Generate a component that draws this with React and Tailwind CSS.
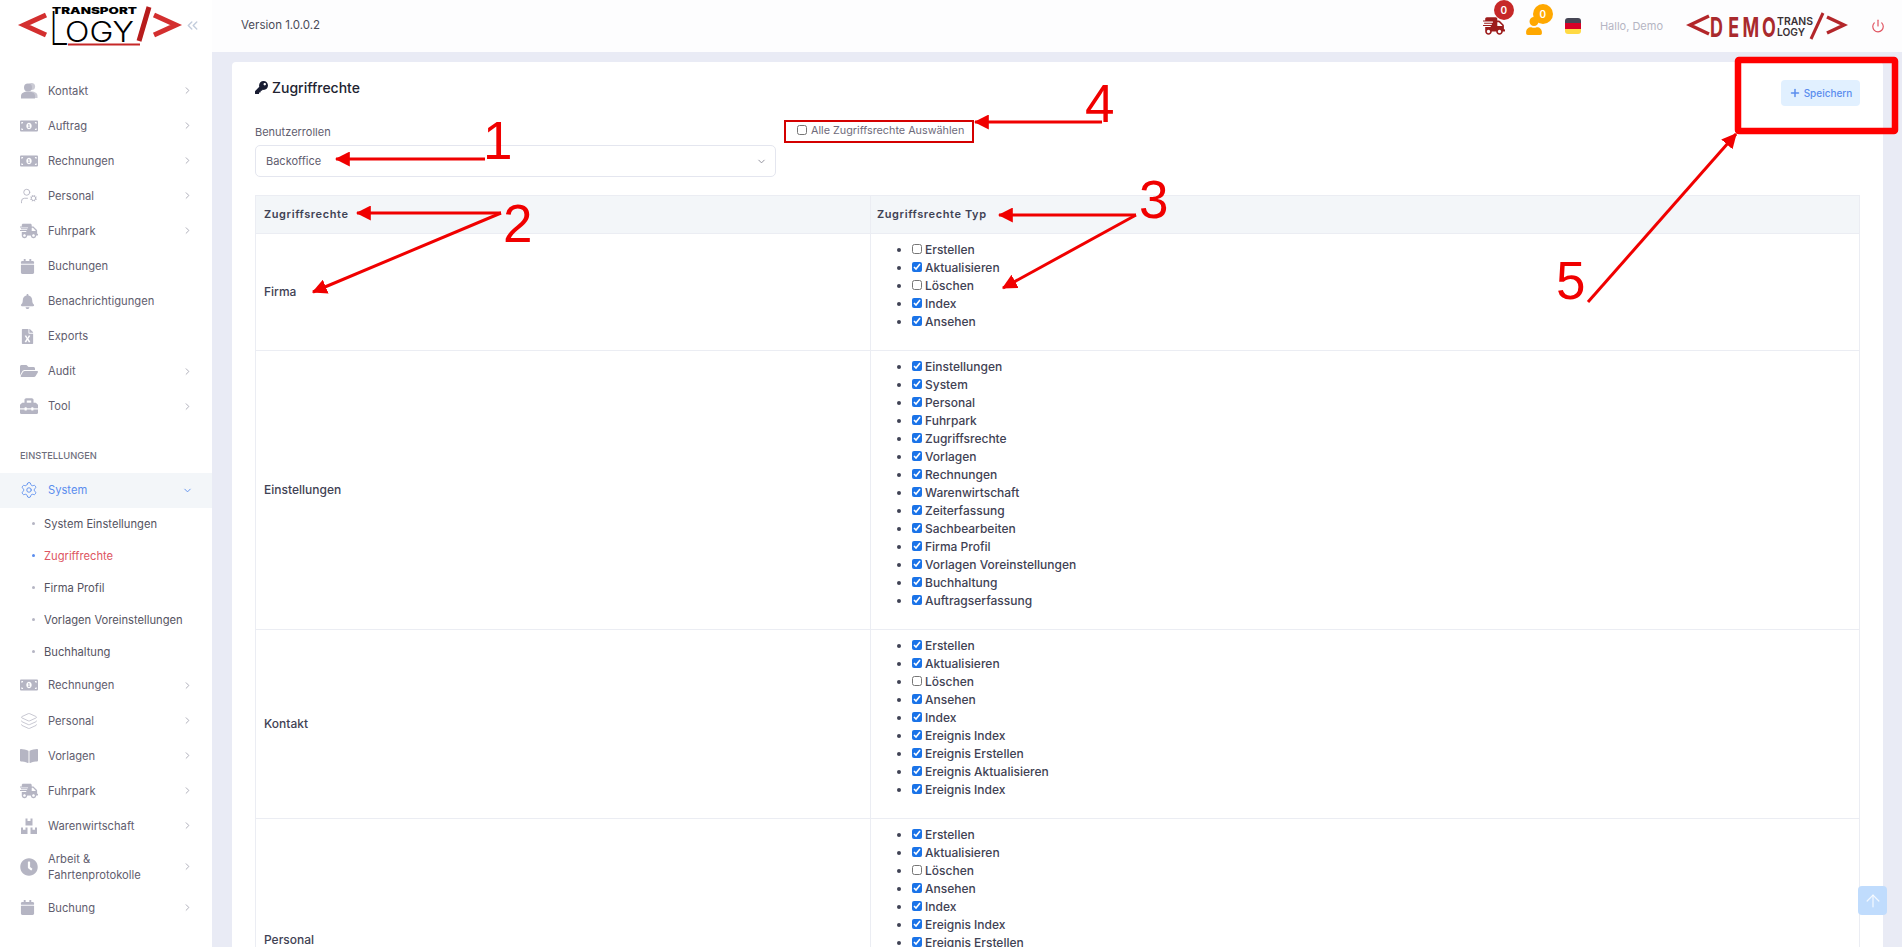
import React from 'react'
import { ChevronRight, ChevronDown, ChevronsLeft, Settings, Layers, Plus, Power, UserCog, ArrowUp } from 'lucide-react'
import {
  FaMoneyBillAlt,
  FaShippingFast,
  FaCalendar,
  FaBell,
  FaFileExcel,
  FaFolderOpen,
  FaToolbox,
  FaBookOpen,
  FaClock,
  FaKey,
  FaUser,
} from 'react-icons/fa'

function ContactIcon({ size }) {
  return (
    <svg width={size} height={size} viewBox="0 0 18 18" fill="currentColor">
      <circle cx="11.5" cy="4.5" r="3.6" opacity="0.7" />
      <path d="M10 9.5c4 -.5 7.5 1 7.5 4.5v2H12z" opacity="0.7" />
      <circle cx="8" cy="5.5" r="4" />
      <path d="M1 16.5v-2.5c0-3 3-4.5 7-4.5s7 1.5 7 4.5v2.5z" />
    </svg>
  )
}

function BoxesIcon({ size }) {
  return (
    <svg width={size} height={size} viewBox="0 0 18 18" fill="currentColor">
      <path d="M5.5 1.5h2v2.5h3v-2.5h2v7h-7z" />
      <path d="M1 10.5h2v2.2h2.5v-2.2h2v6.5H1z" />
      <path d="M10.5 10.5h2v2.2H15v-2.2h2v6.5h-6.5z" />
    </svg>
  )
}

const TOP_MENU = [
  { label: 'Kontakt', icon: ContactIcon, arrow: true },
  { label: 'Auftrag', icon: FaMoneyBillAlt, arrow: true },
  { label: 'Rechnungen', icon: FaMoneyBillAlt, arrow: true },
  { label: 'Personal', icon: UserCog, arrow: true, stroke: 1.2 },
  { label: 'Fuhrpark', icon: FaShippingFast, arrow: true },
  { label: 'Buchungen', icon: FaCalendar, size: 15 },
  { label: 'Benachrichtigungen', icon: FaBell, size: 15 },
  { label: 'Exports', icon: FaFileExcel, size: 15 },
  { label: 'Audit', icon: FaFolderOpen, arrow: true },
  { label: 'Tool', icon: FaToolbox, arrow: true },
]

const SUB_MENU = ['System Einstellungen', 'Zugriffrechte', 'Firma Profil', 'Vorlagen Voreinstellungen', 'Buchhaltung']

const BOTTOM_MENU = [
  { label: 'Rechnungen', icon: FaMoneyBillAlt, arrow: true },
  { label: 'Personal', icon: Layers, arrow: true, stroke: 1 },
  { label: 'Vorlagen', icon: FaBookOpen, arrow: true },
  { label: 'Fuhrpark', icon: FaShippingFast, arrow: true },
  { label: 'Warenwirtschaft', icon: BoxesIcon, arrow: true },
]

const ROWS = [
  {
    name: 'Firma',
    items: [['Erstellen', false], ['Aktualisieren', true], ['Löschen', false], ['Index', true], ['Ansehen', true]],
  },
  {
    name: 'Einstellungen',
    items: [
      ['Einstellungen', true],
      ['System', true],
      ['Personal', true],
      ['Fuhrpark', true],
      ['Zugriffsrechte', true],
      ['Vorlagen', true],
      ['Rechnungen', true],
      ['Warenwirtschaft', true],
      ['Zeiterfassung', true],
      ['Sachbearbeiten', true],
      ['Firma Profil', true],
      ['Vorlagen Voreinstellungen', true],
      ['Buchhaltung', true],
      ['Auftragserfassung', true],
    ],
  },
  {
    name: 'Kontakt',
    items: [
      ['Erstellen', true],
      ['Aktualisieren', true],
      ['Löschen', false],
      ['Ansehen', true],
      ['Index', true],
      ['Ereignis Index', true],
      ['Ereignis Erstellen', true],
      ['Ereignis Aktualisieren', true],
      ['Ereignis Index', true],
    ],
  },
  {
    name: 'Personal',
    items: [
      ['Erstellen', true],
      ['Aktualisieren', true],
      ['Löschen', false],
      ['Ansehen', true],
      ['Index', true],
      ['Ereignis Index', true],
      ['Ereignis Erstellen', true],
      ['Ereignis Aktualisieren', true],
      ['Ereignis Index', true],
      ['Dokumente', true],
      ['Urlaub', true],
      ['Gehalt', true],
    ],
  },
]

function MenuRow({ label, icon: Icon, arrow = false, size = 18, stroke, className = 'h-[35.1px]' }) {
  return (
    <div className={`flex items-center pl-[20px] pr-[19px] ${className}`}>
      <span className="w-[28px] shrink-0 text-[#b5b5c3]">
        <Icon size={size} strokeWidth={stroke} />
      </span>
      <span className="flex-1 text-[11.2px] leading-[16px] text-[#5f5d6e]">{label}</span>
      {arrow && <ChevronRight size={11} className="text-[#a8a8b5]" />}
    </div>
  )
}

function SideLogo() {
  return (
    <svg width="200" height="52" viewBox="0 0 200 52" className="shrink-0">
      <polyline points="46,15 24,25 46,35" fill="none" stroke="#d32f2f" strokeWidth="5" />
      <polyline points="154,15 176,25 154,35" fill="none" stroke="#d32f2f" strokeWidth="5" />
      <line x1="149" y1="7" x2="139" y2="41" stroke="#b71c1c" strokeWidth="5" />
      <text x="52" y="14" fontSize="9" fontWeight="900" textLength="85" lengthAdjust="spacingAndGlyphs" fontFamily="Inter, sans-serif" fill="#000">TRANSPORT</text>
      <text x="49" y="45" fontSize="46" fontWeight="200" fontFamily="Inter, sans-serif" fill="#000" textLength="20" lengthAdjust="spacingAndGlyphs">L</text>
      <text x="65" y="42" fontSize="28" fontWeight="300" textLength="69" lengthAdjust="spacingAndGlyphs" fontFamily="Inter, sans-serif" fill="#000">OGY</text>
      <line x1="68" y1="44.5" x2="140" y2="44.5" stroke="#c62828" strokeWidth="2" />
    </svg>
  )
}

function DemoLogo() {
  return (
    <svg width="162" height="30" viewBox="0 0 162 30">
      <polyline points="23,5 4,14 23,23" fill="none" stroke="#b3262a" strokeWidth="3.5" />
      <polyline points="141,6 158,14 141,22" fill="none" stroke="#b3262a" strokeWidth="3.5" />
      <line x1="137" y1="2" x2="125" y2="28" stroke="#b3262a" strokeWidth="3" />
      <text transform="scale(0.65 1)" x="37 65 87 117" y="26" fontSize="27.5" fontWeight="700" fontFamily="Inter, sans-serif" fill="#a92a2d">DEMO</text>
      <text x="91" y="14" fontSize="11" fontWeight="600" textLength="36" lengthAdjust="spacingAndGlyphs" fontFamily="Inter, sans-serif" fill="#3a3034">TRANS</text>
      <text x="91" y="25" fontSize="11" fontWeight="600" textLength="28" lengthAdjust="spacingAndGlyphs" fontFamily="Inter, sans-serif" fill="#3a3034">LOGY</text>
    </svg>
  )
}

function Sidebar() {
  return (
    <aside className="w-[212px] shrink-0 bg-white">
      <div className="flex h-[73px] items-start">
        <SideLogo />
        <ChevronsLeft size={17} className="-ml-[16px] mt-[17px] text-[#c3cddc]" />
      </div>
      {TOP_MENU.map((m) => (
        <MenuRow key={m.label} {...m} />
      ))}
      <div className="flex h-[49px] items-end pb-[10px] pl-[20px] text-[9.3px] leading-[14px] font-medium text-[#6e6e7c]">
        EINSTELLUNGEN
      </div>
      <div className="flex h-[35px] items-center bg-[#f3f6f9] pl-[20px] pr-[19px]">
        <span className="w-[28px] text-[#5a8dee]">
          <Settings size={18} strokeWidth={1.2} />
        </span>
        <span className="flex-1 text-[11.2px] text-[#5a8dee]">System</span>
        <ChevronDown size={11} className="text-[#5a8dee]" />
      </div>
      {SUB_MENU.map((s) => {
        const active = s === 'Zugriffrechte'
        return (
          <div key={s} className="flex h-[32px] items-center pl-[32px]">
            <span className={`mr-[9px] h-[3px] w-[3px] rounded-full ${active ? 'bg-[#5a8dee]' : 'bg-[#b5b5c3]'}`} />
            <span className={`text-[11.2px] ${active ? 'text-[#dd5562]' : 'text-[#55535f]'}`}>{s}</span>
          </div>
        )
      })}
      {BOTTOM_MENU.map((m) => (
        <MenuRow key={m.label} {...m} />
      ))}
      <MenuRow label="Arbeit & Fahrtenprotokolle" icon={FaClock} arrow className="h-[47px]" />
      <MenuRow label="Buchung" icon={FaCalendar} arrow size={15} />
    </aside>
  )
}

function Header() {
  return (
    <header className="flex h-[52px] shrink-0 items-center bg-[#fdfdfe] pl-[29px] pr-[17px]">
      <span className="flex-1 text-[11.5px] text-[#4a4a57]">Version 1.0.0.2</span>
      <div className="relative mr-[20px]">
        <FaShippingFast size={22} className="text-[#9c1c1c]" />
        <span className="absolute -right-[9px] -top-[15px] flex h-[20px] w-[20px] items-center justify-center rounded-full bg-[#c62828] text-[10px] font-semibold text-white">0</span>
      </div>
      <div className="relative mr-[22px]">
        <FaUser size={18} className="text-[#ffa800]" />
        <span className="absolute -right-[10px] -top-[13px] flex h-[20px] w-[20px] items-center justify-center rounded-full bg-[#ffa800] text-[10px] font-semibold text-white">0</span>
      </div>
      <div className="mr-[19px] flex h-[16px] w-[16px] flex-col overflow-hidden rounded-[3px]">
        <span className="h-1/3 bg-[#464655]" />
        <span className="h-1/3 bg-[#d80027]" />
        <span className="h-1/3 bg-[#ffda44]" />
      </div>
      <span className="mr-[23px] text-[11px] text-[#b5b5c3]">Hallo, Demo</span>
      <DemoLogo />
      <Power size={14} className="ml-[23px] text-[#e0525f]" />
    </header>
  )
}

function PermissionTable() {
  return (
    <table className="w-full border-collapse border border-[#ebedf3] text-[#3f4254]">
      <thead>
        <tr className="h-[38px] bg-[#f3f6f9] text-left text-[11px] font-semibold tracking-[0.6px]">
          <th className="w-[615px] border border-[#ebedf3] px-[8px] font-semibold">Zugriffsrechte</th>
          <th className="border border-[#ebedf3] pl-[6px] font-semibold">Zugriffsrechte Typ</th>
        </tr>
      </thead>
      <tbody>
        {ROWS.map((row) => (
          <tr key={row.name}>
            <td className="border border-[#ebedf3] px-[8px] text-[12px] font-medium">{row.name}</td>
            <td className="border border-[#ebedf3] pb-[19px] pl-[41px] pt-[7px]">
              <ul className="list-disc text-[12px] font-medium leading-[18px]">
                {row.items.map(([label, checked], i) => (
                  <li key={label + i} className="marker:text-[#3f4254]">
                    <label className="flex items-center gap-[3px]">
                      <input type="checkbox" readOnly checked={checked} className="-mt-[2px] h-[10px] w-[10px] accent-[#1a73e8]" />
                      {label}
                    </label>
                  </li>
                ))}
              </ul>
            </td>
          </tr>
        ))}
      </tbody>
    </table>
  )
}

function Annotations() {
  const red = '#f00000'
  return (
    <>
      <svg width="1902" height="947" className="pointer-events-none absolute left-0 top-0">
        <defs>
          <marker id="head" markerWidth="5" markerHeight="5" refX="4.6" refY="2.5" orient="auto">
            <polygon points="0,0 5,2.5 0,5" fill={red} />
          </marker>
        </defs>
        <g stroke={red} strokeWidth="3" fill="none">
          <line x1="485" y1="159" x2="336" y2="159" markerEnd="url(#head)" />
          <line x1="501" y1="213" x2="357" y2="213" markerEnd="url(#head)" />
          <line x1="501" y1="213" x2="313" y2="292" markerEnd="url(#head)" />
          <line x1="1136" y1="215" x2="999" y2="215" markerEnd="url(#head)" />
          <line x1="1136" y1="215" x2="1003" y2="288" markerEnd="url(#head)" />
          <line x1="1102" y1="122" x2="975" y2="122" markerEnd="url(#head)" />
          <line x1="1588" y1="302" x2="1736" y2="134" markerEnd="url(#head)" />
        </g>
        <rect x="785" y="121" width="188" height="21" fill="none" stroke="#d40000" strokeWidth="2" />
        <rect x="1738" y="60" width="157" height="71" rx="1" fill="none" stroke="#ff0000" strokeWidth="6.5" />
      </svg>
      <span className="absolute left-[483px] top-[111px] text-[53px] leading-[60px] text-[#f00000] [font-family:'Liberation_Sans',sans-serif]">1</span>
      <span className="absolute left-[503px] top-[194px] text-[53px] leading-[60px] text-[#f00000] [font-family:'Liberation_Sans',sans-serif]">2</span>
      <span className="absolute left-[1139px] top-[170px] text-[53px] leading-[60px] text-[#f00000] [font-family:'Liberation_Sans',sans-serif]">3</span>
      <span className="absolute left-[1085px] top-[74px] text-[53px] leading-[60px] text-[#f00000] [font-family:'Liberation_Sans',sans-serif]">4</span>
      <span className="absolute left-[1556px] top-[251px] text-[53px] leading-[60px] text-[#f00000] [font-family:'Liberation_Sans',sans-serif]">5</span>
    </>
  )
}

export default function App() {
  return (
    <div className="relative flex h-screen w-full overflow-hidden bg-[#e9ebf5] [font-family:Inter,'Noto_Sans',sans-serif]">
      <Sidebar />
      <div className="flex min-w-0 flex-1 flex-col">
        <Header />
        <main className="min-h-0 flex-1 pl-[20px] pr-[19px] pt-[10px]">
          <div className="rounded-[4px] bg-white px-[23px] pt-[18px]">
            <div className="flex items-start justify-between">
              <h2 className="flex h-[14px] items-center gap-[4px] text-[14px] font-medium text-[#212331]">
                <FaKey size={13} className="text-[#181c32]" />
                Zugriffrechte
              </h2>
              <button className="flex h-[26px] w-[79px] items-center justify-center gap-[3px] rounded-[4px] bg-[#e1f0ff] text-[10px] font-medium text-[#5a8dee]">
                <Plus size={12} strokeWidth={3} />
                Speichern
              </button>
            </div>
            <div className="mt-[18px] flex">
              <div className="w-[521px]">
                <div className="mb-[5px] h-[16px] text-[11px] leading-[16px] text-[#5f5d6e]">Benutzerrollen</div>
                <div className="flex h-[32px] items-center justify-between rounded-[5px] border border-[#e4e6ef] pl-[10px] pr-[8px] text-[11px] text-[#5f5d6e]">
                  Backoffice
                  <ChevronDown size={11} className="text-[#8a8a96]" />
                </div>
              </div>
              <label className="ml-[21px] flex h-[15px] items-center gap-[4px] text-[10.8px] text-[#6e6b7b]">
                <input type="checkbox" readOnly checked={false} className="-mt-[3px] h-[10px] w-[10px] accent-[#1a73e8]" />
                Alle Zugriffsrechte Auswählen
              </label>
            </div>
            <div className="mt-[18px]">
              <PermissionTable />
            </div>
          </div>
        </main>
      </div>
      <Annotations />
      <button className="absolute left-[1858px] top-[886px] flex h-[29px] w-[29px] items-center justify-center rounded-[4px] bg-[#c0dcfd]">
        <ArrowUp size={20} strokeWidth={1.5} className="text-white/80" />
      </button>
    </div>
  )
}
